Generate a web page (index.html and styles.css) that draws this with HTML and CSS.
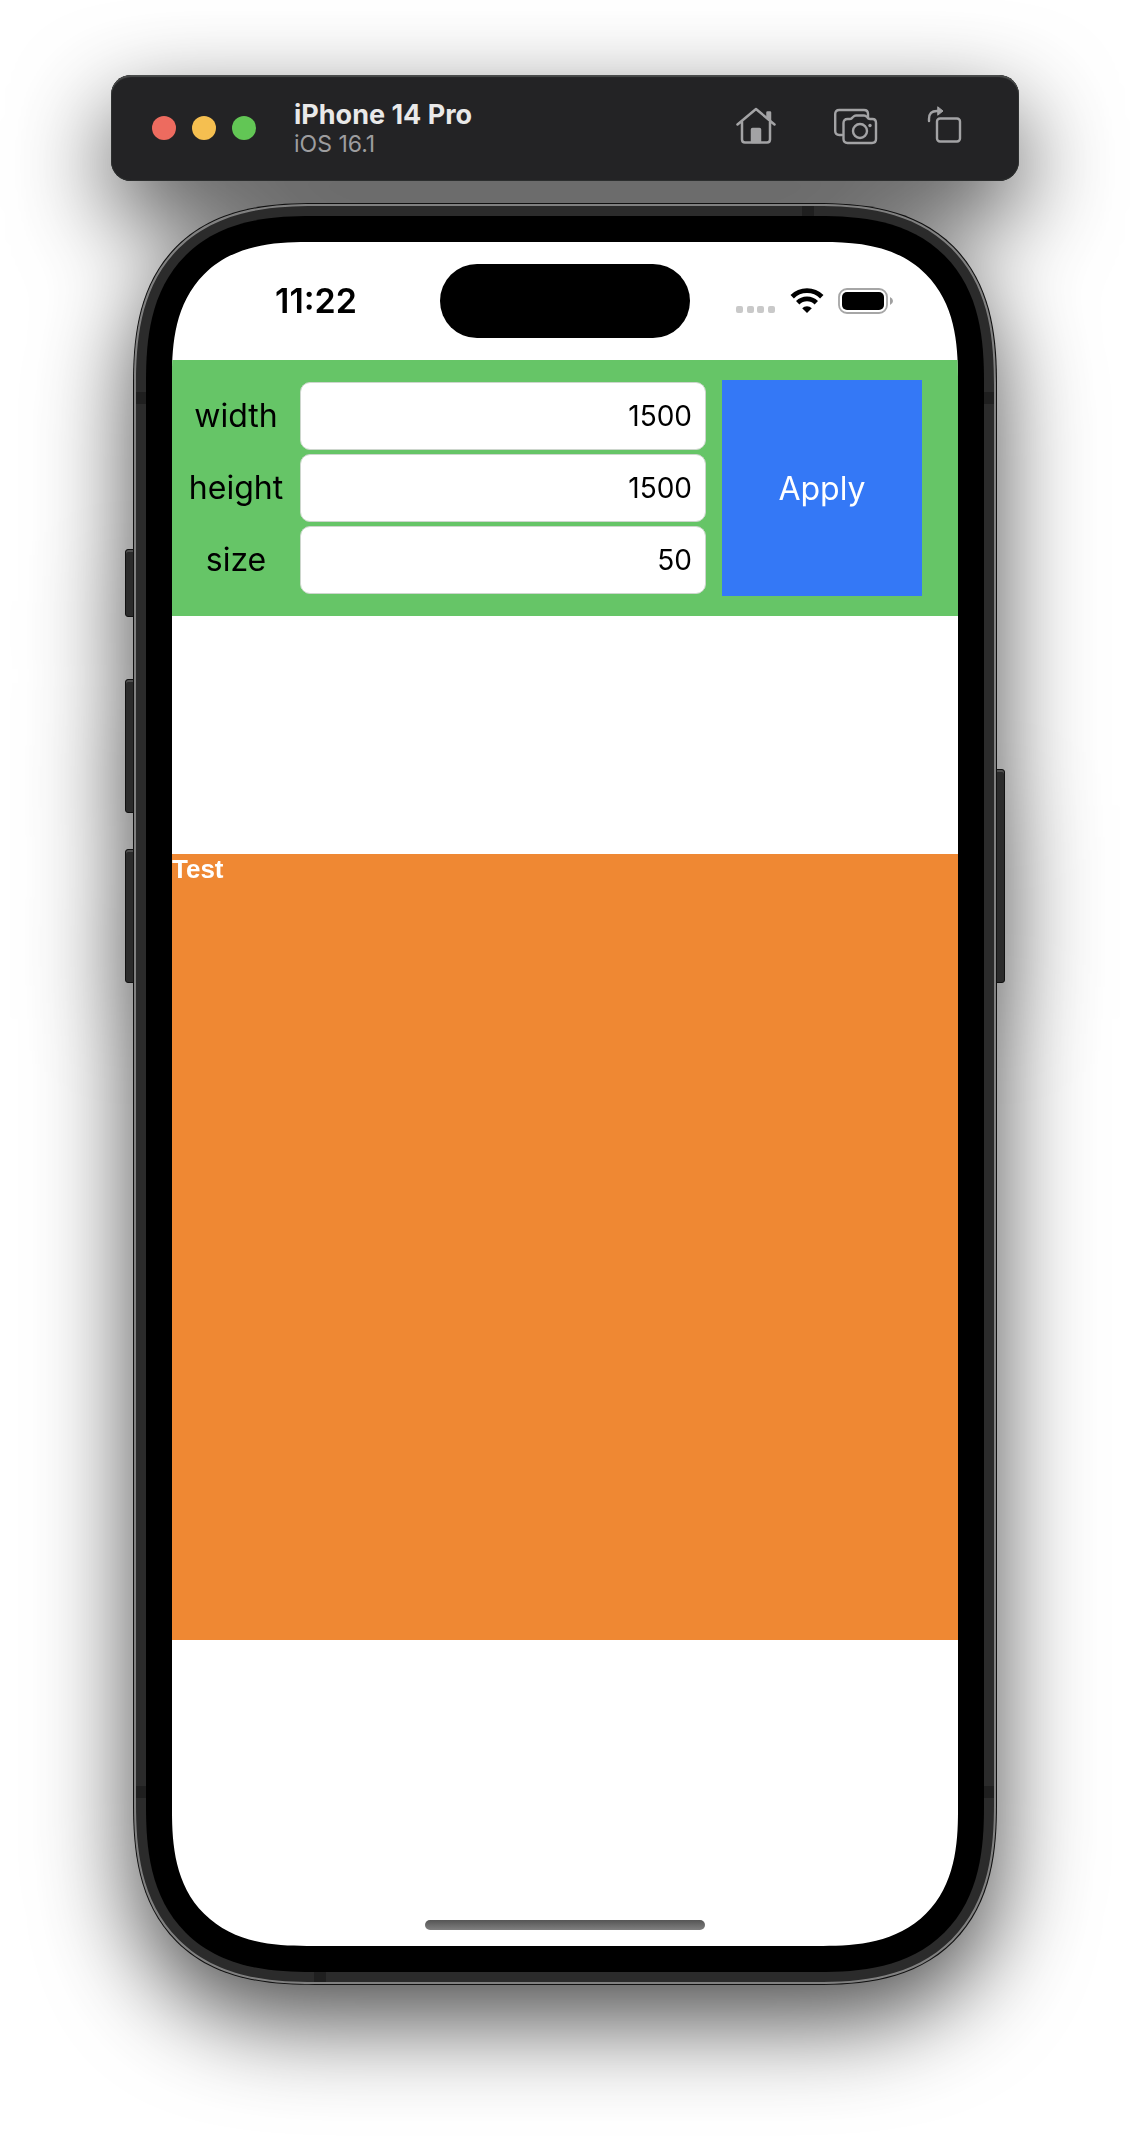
FILE: index.html
```html
<!DOCTYPE html>
<html lang="en">
<head>
<meta charset="utf-8">
<meta name="viewport" content="width=device-width, initial-scale=1">
<title>iPhone 14 Pro</title>
<link rel="stylesheet" href="styles.css">
</head>
<body>
<main class="simulator">
  <header class="toolbar">
    <div class="lights">
      <button class="light light-close" type="button" aria-label="Close"></button>
      <button class="light light-min" type="button" aria-label="Minimize"></button>
      <button class="light light-zoom" type="button" aria-label="Zoom"></button>
    </div>
    <div class="device">
      <h1 class="device-name">iPhone 14 Pro</h1>
      <p class="device-os">iOS 16.1</p>
    </div>
    <div class="tools">
      <button class="tool" type="button" aria-label="Home">
        <svg width="50" height="40" viewBox="0 2 50 40" fill="none" stroke="currentColor" stroke-width="2.500" stroke-linecap="round" stroke-linejoin="round">
          <path d="M1.500 18.500 20 3 38.500 18.500M6 16v17.500q0 3 3 3h22q3 0 3-3V16"/>
          <path d="M31.500 12V6.500h2.500V14.500"/>
          <path d="M16 36V23.500q0-.5.500-.5h7q.5 0 .5.500V36z" fill="currentColor"/>
        </svg>
      </button>
      <button class="tool" type="button" aria-label="Screenshot">
        <svg width="44" height="40" viewBox="0 2 44 40" fill="none" stroke="currentColor" stroke-width="2.400" stroke-linecap="round" stroke-linejoin="round">
          <path d="M8 29H5.200q-4 0-4-4V8q0-4 4-4H30q4 0 4 4v4"/>
          <path d="M13.500 13h2.500q1.500 0 2.500-1.500l.5-.5q1.500-1.500 3-1.500h8q1.500 0 3 1.500l.5.500q1 1.500 2.500 1.500h2.500q3.500 0 3.500 4v16q0 4-4 4h-24.500q-4 0-4-4V17q0-4 4-4z"/>
          <circle cx="26" cy="25" r="7"/>
          <circle cx="36" cy="19.500" r="1.700" fill="currentColor" stroke="none"/>
        </svg>
      </button>
      <button class="tool" type="button" aria-label="Rotate">
        <svg width="36" height="40" viewBox="0 2 36 40" fill="none" stroke="currentColor" stroke-width="2.400" stroke-linecap="round" stroke-linejoin="round">
          <rect x="11" y="12.500" width="23" height="23" rx="3"/>
          <path d="M3 15v-2q0-8 8-8h2"/>
          <path d="M12 1 17 5 12 9z" fill="currentColor" stroke-width="1"/>
        </svg>
      </button>
    </div>
  </header>

  <section class="phone">
    <i class="key key-mute"></i>
    <i class="key key-up"></i>
    <i class="key key-down"></i>
    <i class="key key-power"></i>
    <div class="rim">
      <div class="band">
        <i class="seam seam-top"></i>
        <i class="seam seam-bottom"></i>
        <i class="seam seam-left-top"></i>
        <i class="seam seam-left-bottom"></i>
        <i class="seam seam-right-top"></i>
        <i class="seam seam-right-bottom"></i>
        <div class="bezel">
          <div class="screen">
            <div class="status">
              <time class="clock">11:22</time>
              <div class="island"></div>
              <div class="indicators">
                <svg width="40" height="28" viewBox="0 0 40 28" fill="#c9c9c9">
                  <rect x="0" y="19" width="7" height="7" rx="2"/>
                  <rect x="11" y="19" width="7" height="7" rx="2"/>
                  <rect x="21" y="19" width="7" height="7" rx="2"/>
                  <rect x="32" y="19" width="7" height="7" rx="2"/>
                </svg>
                <svg width="34" height="28" viewBox="0 0 34 28" fill="none" stroke="#000" stroke-width="4.800">
                  <path d="M2.200 9.800a21 21 0 0 1 29.600 0"/>
                  <path d="M7.700 15.800a13.200 13.200 0 0 1 18.600 0"/>
                  <path d="M17 26l-4.800-4.800a6.800 6.800 0 0 1 9.600 0z" fill="#000" stroke="none"/>
                </svg>
                <svg width="55" height="28" viewBox="0 0 55 28">
                  <rect x="1" y="2" width="48" height="24" rx="8" fill="none" stroke="#a6a6a6" stroke-width="1.800"/>
                  <rect x="4" y="5" width="42" height="18" rx="5" fill="#000"/>
                  <path d="M52 10q3 1.300 3 4t-3 4z" fill="#a0a0a0"/>
                </svg>
              </div>
            </div>

            <form class="panel">
              <div class="fields">
                <label class="name" for="width">width</label>
                <input class="field" id="width" type="text" inputmode="numeric" value="1500">
                <label class="name" for="height">height</label>
                <input class="field" id="height" type="text" inputmode="numeric" value="1500">
                <label class="name" for="size">size</label>
                <input class="field" id="size" type="text" inputmode="numeric" value="50">
              </div>
              <button class="apply" type="button">Apply</button>
            </form>

            <div class="stage">
              <div class="canvas">Test</div>
            </div>
            <div class="home"><div class="home-bar"></div></div>
          </div>
        </div>
      </div>
    </div>
  </section>
</main>
</body>
</html>
```

FILE: styles.css
```css
* {
  box-sizing: border-box;
}

body {
  margin: 0;
  background: #fff;
  color: #000;
  font-family: Inter, "Liberation Sans", sans-serif;
}

h1,
p {
  margin: 0;
}

button,
input {
  margin: 0;
  padding: 0;
  border: 0;
  font: inherit;
}

.simulator {
  display: flex;
  flex-direction: column;
  gap: 22px;
  max-width: 1130px;
  margin: 0 auto;
  padding: 75px 111px 151px;
  filter: drop-shadow(0 36px 48px rgba(0, 0, 0, 0.7));
}

/* Window toolbar */

.toolbar {
  display: flex;
  align-items: center;
  gap: 38px;
  height: 106px;
  padding: 0 57px 0 41px;
  border-radius: 20px;
  background: #232325;
  box-shadow: inset 0 2px 1px #4a4c4c, inset 0 0 0 1px #2c2e2e;
}

.lights {
  display: flex;
  gap: 16px;
}

.light {
  width: 24px;
  height: 24px;
  border-radius: 50%;
}

.light-close { background: #ed6b5f; }
.light-min { background: #f5bf50; }
.light-zoom { background: #62c655; }

.device {
  flex: 1;
}

.device-name {
  color: #e9e9e9;
  font-size: 27px;
  font-weight: 700;
  line-height: 32px;
}

.device-os {
  color: #9d9d9f;
  font-size: 23px;
  line-height: 26px;
}

.tools {
  display: flex;
  align-items: center;
  gap: 48px;
}

.tool {
  display: flex;
  background: none;
  color: #a3a3a5;
}

.tool svg {
  overflow: visible;
}

/* Phone body */

.phone {
  position: relative;
  margin: 0 22px;
}

.rim,
.band,
.bezel,
.screen {
  position: relative;
  overflow: hidden;
}

.rim {
  padding: 2px;
  border: 1px solid #111;
  border-radius: 149px;
  background: #808080;
}

.band {
  padding: 10px;
  border-radius: 146px;
  background: #2b2b2b;
}

.bezel {
  padding: 26px;
  border-radius: 136px;
  background: #000;
}

.screen {
  border-radius: 110px;
  background: #fff;
}

@supports (corner-shape: superellipse(1.35)) {
  .rim,
  .band,
  .bezel,
  .screen {
    corner-shape: superellipse(1.35);
  }

  .rim { border-radius: 182px; }
  .band { border-radius: 179px; }
  .bezel { border-radius: 166px; }
  .screen { border-radius: 135px; }
}

.key {
  position: absolute;
  width: 10px;
  border: 1px solid #111;
  background: #2b2b2b;
  box-shadow: inset 0 2px 0 #505050;
}

.key-mute,
.key-up,
.key-down {
  left: -8px;
  border-radius: 3px 0 0 3px;
}

.key-mute { top: 346px; height: 68px; }
.key-up { top: 476px; height: 134px; }
.key-down { top: 646px; height: 134px; }

.key-power {
  right: -8px;
  top: 566px;
  height: 214px;
  border-radius: 0 3px 3px 0;
}

.seam {
  position: absolute;
  width: 12px;
  height: 12px;
  background: #1f1f1f;
}

.seam-top { top: 0; right: 180px; }
.seam-bottom { bottom: 0; left: 178px; }
.seam-left-top { left: 0; top: 186px; }
.seam-left-bottom { left: 0; bottom: 184px; }
.seam-right-top { right: 0; top: 186px; }
.seam-right-bottom { right: 0; bottom: 184px; }

/* Status bar */

.status {
  display: grid;
  grid-template-columns: 1fr 250px 1fr;
  align-items: center;
  height: 118px;
}

.clock {
  padding-left: 20px;
  font-size: 34px;
  font-weight: 600;
  line-height: 40px;
  text-align: center;
}

.island {
  height: 74px;
  border-radius: 37px;
  background: #000;
}

.indicators {
  display: flex;
  justify-content: center;
  gap: 14px;
  padding-right: 20px;
}

/* Input panel */

.panel {
  display: flex;
  gap: 16px;
  padding: 20px 36px 20px 16px;
  background: #66c567;
}

.fields {
  flex: 1;
  display: grid;
  grid-template-columns: 96px 1fr;
  align-items: center;
  gap: 4px 16px;
  padding: 2px 0;
}

.name {
  font-size: 32px;
  line-height: 40px;
  text-align: center;
}

.field {
  width: 100%;
  height: 68px;
  padding: 0 13px;
  border: 1px solid #cdd6cd;
  border-radius: 10px;
  background: #fff;
  color: #000;
  font-size: 28px;
  text-align: right;
}

.apply {
  width: 200px;
  background: #3478f6;
  color: #fff;
  font-size: 32px;
}

/* Canvas */

.stage {
  padding: 238px 0;
}

.canvas {
  aspect-ratio: 1;
  background: #ef8833;
  color: #fff;
  font-family: "Liberation Sans", sans-serif;
  font-size: 26px;
  font-weight: 700;
  line-height: 30px;
}

.home {
  display: flex;
  justify-content: center;
  align-items: flex-end;
  height: 68px;
  padding-bottom: 16px;
}

.home-bar {
  width: 280px;
  height: 10px;
  border-radius: 5px;
  background: linear-gradient(#555, #808080);
}
```
